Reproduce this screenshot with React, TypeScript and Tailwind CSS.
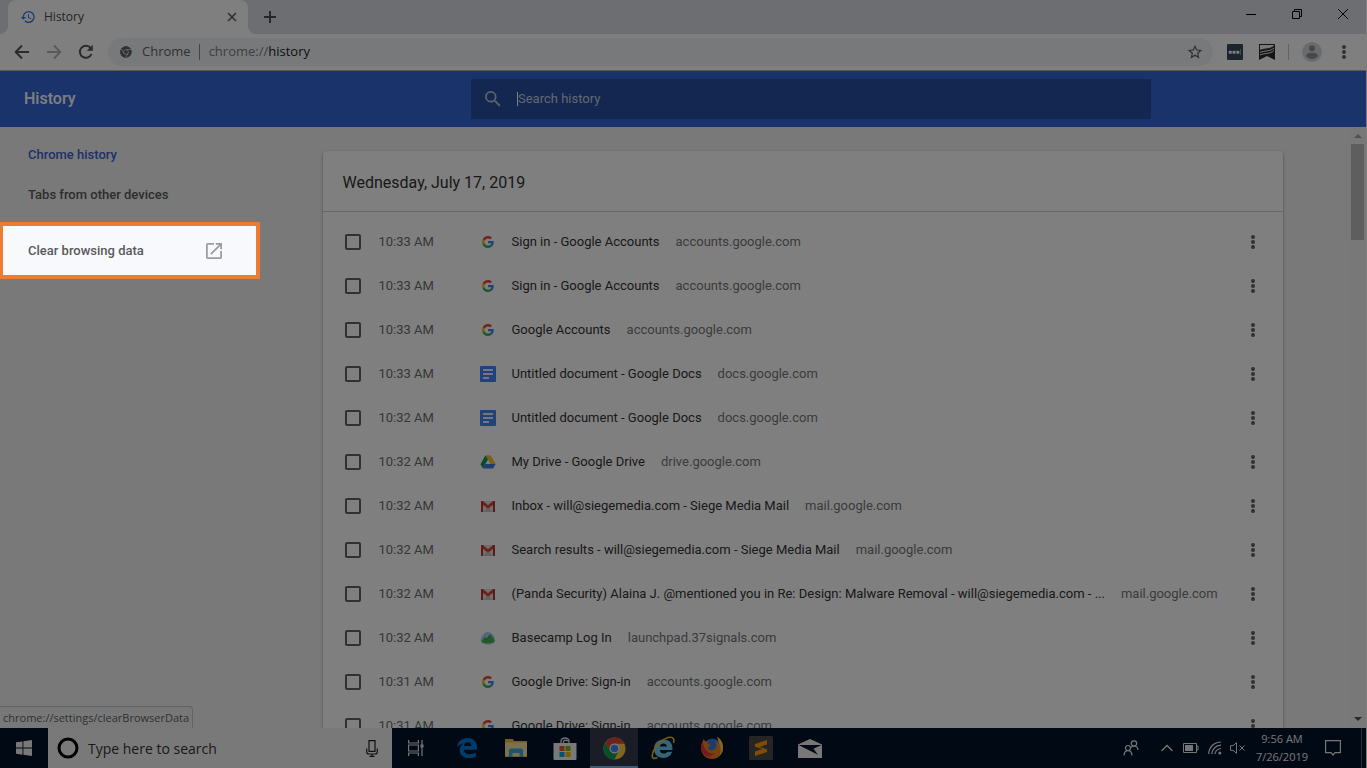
import type { ReactNode } from 'react';

type Favicon = 'google' | 'docs' | 'drive' | 'gmail' | 'basecamp';

interface HistoryEntry {
    id: number;
    time: string;
    icon: Favicon;
    title: string;
    domain: string;
}

const ENTRIES: HistoryEntry[] = [
    { id: 1, time: '10:33 AM', icon: 'google', title: 'Sign in - Google Accounts', domain: 'accounts.google.com' },
    { id: 2, time: '10:33 AM', icon: 'google', title: 'Sign in - Google Accounts', domain: 'accounts.google.com' },
    { id: 3, time: '10:33 AM', icon: 'google', title: 'Google Accounts', domain: 'accounts.google.com' },
    { id: 4, time: '10:33 AM', icon: 'docs', title: 'Untitled document - Google Docs', domain: 'docs.google.com' },
    { id: 5, time: '10:32 AM', icon: 'docs', title: 'Untitled document - Google Docs', domain: 'docs.google.com' },
    { id: 6, time: '10:32 AM', icon: 'drive', title: 'My Drive - Google Drive', domain: 'drive.google.com' },
    { id: 7, time: '10:32 AM', icon: 'gmail', title: 'Inbox - will@siegemedia.com - Siege Media Mail', domain: 'mail.google.com' },
    { id: 8, time: '10:32 AM', icon: 'gmail', title: 'Search results - will@siegemedia.com - Siege Media Mail', domain: 'mail.google.com' },
    { id: 9, time: '10:32 AM', icon: 'gmail', title: '(Panda Security) Alaina J. @mentioned you in Re: Design: Malware Removal - will@siegemedia.com - ...', domain: 'mail.google.com' },
    { id: 10, time: '10:32 AM', icon: 'basecamp', title: 'Basecamp Log In', domain: 'launchpad.37signals.com' },
    { id: 11, time: '10:31 AM', icon: 'google', title: 'Google Drive: Sign-in', domain: 'accounts.google.com' },
    { id: 12, time: '10:31 AM', icon: 'google', title: 'Google Drive: Sign-in', domain: 'accounts.google.com' },
];

function SiteIcon({ icon }: { icon: Favicon }) {
    if (icon === 'google') {
        return (
            <svg className="size-4" viewBox="-8 -8 64 64">
                <path fill="#EA4335" d="M24 9.5c3.54 0 6.71 1.22 9.21 3.6l6.85-6.85C35.9 2.38 30.47 0 24 0 14.62 0 6.51 5.38 2.56 13.22l7.98 6.19C12.43 13.72 17.74 9.5 24 9.5z" />
                <path fill="#4285F4" d="M46.98 24.55c0-1.57-.15-3.09-.38-4.55H24v9.02h12.94c-.58 2.96-2.26 5.48-4.78 7.18l7.73 6c4.51-4.18 7.09-10.36 7.09-17.65z" />
                <path fill="#FBBC05" d="M10.53 28.59A14.5 14.5 0 0 1 9.77 24c0-1.6.27-3.14.76-4.59l-7.98-6.19A23.9 23.9 0 0 0 0 24c0 3.88.92 7.54 2.56 10.78l7.97-6.19z" />
                <path fill="#34A853" d="M24 48c6.48 0 11.93-2.13 15.89-5.81l-7.73-6c-2.15 1.45-4.92 2.3-8.16 2.3-6.26 0-11.57-4.22-13.47-9.91l-7.98 6.19C6.51 42.62 14.62 48 24 48z" />
            </svg>
        );
    }
    if (icon === 'docs') {
        return (
            <svg className="size-4" viewBox="0 0 16 16">
                <rect width="16" height="16" rx="1" fill="#4285f4" />
                <path d="M3 4h10M3 8h10M3 12h6" stroke="#e8eefb" strokeWidth="2" />
            </svg>
        );
    }
    if (icon === 'drive') {
        return (
            <svg className="size-4" viewBox="0 0 16 16">
                <path d="M5.5 1.2h5L15.6 10h-5z" fill="#f9c034" />
                <path d="M5.5 1.2 8 5.6 2.9 14.6.4 10.2z" fill="#0f9d58" />
                <path d="M5.4 10.1h10.2l-2.5 4.500H2.9z" fill="#4477e8" />
            </svg>
        );
    }
    if (icon === 'gmail') {
        return (
            <svg className="size-4" viewBox="0 0 16 16">
                <path d="M1 3h14v11H1z" fill="#dedede" />
                <path d="m3 14 5-5 5 5z" fill="#c4c4c4" />
                <path d="M1 3h2l5 4.200L13 3h2v2.200l-7 5.600-7-5.600z" fill="#dd4338" />
                <path d="M1 3.500h2V14H1zM13 3.500h2V14h-2z" fill="#b9322b" />
            </svg>
        );
    }
    return (
        <svg className="size-4" viewBox="0 0 16 16">
            <path d="M8 2c4 0 6.300 3.800 7.200 8 .5 2.600-2.500 4.500-7.200 4.500S.3 12.600.8 10C1.700 5.800 4 2 8 2z" fill="#a9cfe8" />
            <path d="M1.500 11 4.700 7.400l1.800 2 4-4.600c2 1.800 3.200 4 4 6.200-.7 1.700-3 2.300-6.500 2.300S2 12.500 1.500 11z" fill="#48b04e" />
            <path d="m4.700 7.400 1.800 2 4-4.600" fill="none" stroke="#2c7a3c" strokeWidth="1" />
        </svg>
    );
}

function ChromeLogo({ className, mono }: { className: string; mono?: boolean }) {
    const [red, yellow, green, blue, ring] = mono
        ? ['#5f6368', '#5f6368', '#5f6368', '#5f6368', '#f1f3f4']
        : ['#db4437', '#ffcd40', '#0f9d58', '#4285f4', '#f1f1f1'];
    return (
        <svg className={className} viewBox="0 0 24 24">
            <circle cx="12" cy="12" r="11.500" fill={yellow} />
            <path d="M2.040 6.250A11.500 11.500 0 0 1 21.960 6.250L22 7H12a5 5 0 0 0-4.330 7.500z" fill={red} />
            <path d="M2.040 6.250A11.500 11.500 0 0 0 12 23.500l4.330-9a5 5 0 0 1-8.660 0z" fill={green} />
            {mono && <path d="M12 7h10M7.670 14.500 2.500 5.800M16.330 14.500 11.500 23" stroke={ring} strokeWidth="1.300" />}
            <circle cx="12" cy="12" r="5.200" fill={ring} />
            <circle cx="12" cy="12" r="4" fill={blue} />
        </svg>
    );
}

function Dots() {
    return (
        <svg className="h-[14px] w-4" viewBox="0 1 16 14" fill="#5f6368">
            <circle cx="8" cy="3" r="2" />
            <circle cx="8" cy="8" r="2" />
            <circle cx="8" cy="13" r="2" />
        </svg>
    );
}

function IconButton({ label, className, children }: { label: string; className: string; children: ReactNode }) {
    return (
        <button type="button" aria-label={label} className={`flex shrink-0 items-center justify-center ${className}`}>
            {children}
        </button>
    );
}

function TabStrip() {
    return (
        <div className="flex h-[34px] shrink-0 bg-[#dadce4]">
            {/* rounded feet on both sides of the active tab */}
            <div className="w-2 bg-white">
                <div className="h-full rounded-br-lg bg-[#dadce4]" />
            </div>
            <div className="flex w-60 items-center rounded-t-lg bg-white pr-2 pl-3">
                <svg className="size-4" viewBox="0 0 24 24" fill="#3b78e7">
                    <path d="M13 3a9 9 0 0 0-9 9H1l3.890 3.890.070.140L9 12H6a7 7 0 1 1 2.060 4.940l-1.420 1.420A9 9 0 1 0 13 3zm-1 5v5l4.280 2.540.720-1.210-3.500-2.080V8z" />
                </svg>
                <span className="ml-2 flex-1 text-xs text-[#45494d]">History</span>
                <IconButton label="Close tab" className="size-4">
                    <svg className="size-[10px]" viewBox="0 0 10 10" stroke="#5a5e62" strokeWidth="1.600">
                        <path d="m1 1 8 8M9 1 1 9" />
                    </svg>
                </IconButton>
            </div>
            <div className="w-2 bg-white">
                <div className="h-full rounded-bl-lg bg-[#dadce4]" />
            </div>
            <IconButton label="New tab" className="w-7">
                <svg className="size-3" viewBox="0 0 12 12" stroke="#4a4e52" strokeWidth="2">
                    <path d="M6 0v12M0 6h12" />
                </svg>
            </IconButton>
            <div className="ml-auto flex h-7">
                <IconButton label="Minimize" className="w-[46px]">
                    <svg className="size-[10px]" viewBox="0 0 10 10"><path d="M0 5.500h10" stroke="#000" /></svg>
                </IconButton>
                <IconButton label="Restore" className="w-[46px]">
                    <svg className="size-[10px]" viewBox="0 0 10 10" fill="none" stroke="#000"><path d="M.5 2.500h7v7h-7zM2.500 2.500v-2h7v7h-2" /></svg>
                </IconButton>
                <IconButton label="Close" className="w-[46px]">
                    <svg className="size-[10px]" viewBox="0 0 10 10" stroke="#000"><path d="m0 0 10 10M10 0 0 10" /></svg>
                </IconButton>
            </div>
        </div>
    );
}

function Toolbar() {
    return (
        <div className="flex h-[37px] shrink-0 items-center border-b border-[#b4b4a8] bg-white pr-3 pl-[6px]">
            <IconButton label="Back" className="size-8">
                <svg className="size-4" viewBox="0 0 16 16" fill="none" stroke="#54575b" strokeWidth="2"><path d="M15 8H2M8 1.500 1.700 8 8 14.500" /></svg>
            </IconButton>
            <IconButton label="Forward" className="size-8">
                <svg className="size-4" viewBox="0 0 16 16" fill="none" stroke="#b2b4b6" strokeWidth="2"><path d="M1 8h13M8 1.500 14.300 8 8 14.500" /></svg>
            </IconButton>
            <IconButton label="Reload" className="size-8">
                <svg className="size-4" viewBox="0 0 16 16" fill="none" stroke="#54575b" strokeWidth="2">
                    <path d="M13.500 10A6 6 0 1 1 12.800 4.300" />
                    <path d="M14.800.8v6H8.800z" fill="#54575b" stroke="none" />
                </svg>
            </IconButton>
            <div className="ml-[6px] flex h-7 min-w-0 flex-1 items-center rounded-full bg-[#f1f3f4] pr-2 pl-3 text-[13px]">
                <ChromeLogo className="size-3" mono />
                <span className="ml-[10px] text-[#5f6368]">Chrome</span>
                <span className="mr-[9px] ml-2 h-4 w-px bg-[#85888c]" />
                <span className="text-[#7d8084]">chrome://<span className="text-[#202124]">history</span></span>
                <IconButton label="Bookmark this page" className="ml-auto size-5">
                    <svg className="size-4" viewBox="0 0 24 24" fill="#5f6368">
                        <path d="m23 9-7.900-.7L12 1 8.900 8.300 1 9l6 5.200L5.200 22l6.800-4.100 6.800 4.100-1.800-7.800L23 9zm-11 6.600-4.100 2.500 1.100-4.700-3.600-3.100 4.800-.4L12 5.500l1.900 4.400 4.800.4-3.700 3.100 1.100 4.700-4.100-2.500z" />
                    </svg>
                </IconButton>
            </div>
            <IconButton label="Password manager" className="ml-[14px] size-4">
                <svg className="size-4" viewBox="0 0 16 16">
                    <rect width="16" height="16" rx="1" fill="#38495c" />
                    <path d="M2 7h2.500v2.500H2zM5.800 7h2.500v2.500H5.800zM9.600 7h2.500v2.500H9.600zM13.500 5v6" fill="#fff" stroke="#fff" strokeWidth=".4" />
                </svg>
            </IconButton>
            <IconButton label="Reader extension" className="ml-4 size-4">
                <svg className="size-4" viewBox="0 0 16 16">
                    <path d="M0 0h16v16l-8-4-8 4z" fill="#2b2b2b" />
                    <path d="M1 1h14v1C11 6 6 4 1 6.500z" fill="#f4f4f4" />
                    <path d="M1 8.500C6 6 11 8 15 4M1 11c5-2.500 10-.5 14-4.500" stroke="#f4f4f4" fill="none" />
                    <path d="M1 6.500C6 4 11 6 15 2" stroke="#2b2b2b" fill="none" />
                </svg>
            </IconButton>
            <span className="mx-[13px] h-4 w-px bg-[#c4c7ca]" />
            <IconButton label="Profile" className="size-5">
                <svg className="size-5" viewBox="0 0 20 20">
                    <circle cx="10" cy="10" r="10" fill="#d5d7d9" />
                    <circle cx="10" cy="6.300" r="3" fill="#8c9195" />
                    <path d="M4 14c0-4.500 12-4.500 12 0-1.500 2-3.500 3-6 3s-4.500-1-6-3z" fill="#8c9195" />
                </svg>
            </IconButton>
            <IconButton label="Chrome menu" className="ml-3 size-5">
                <Dots />
            </IconButton>
        </div>
    );
}

function HistoryHeader() {
    return (
        <header className="flex h-14 shrink-0 items-center bg-[#3467d6] font-[Roboto,sans-serif]">
            <h1 className="w-64 shrink-0 pl-6 text-[16px] font-medium text-white">History</h1>
            <div className="flex-1">
                <div className="mx-auto flex h-10 max-w-[680px] items-center bg-[#284fa2] pl-[14px]">
                    <svg className="size-4" viewBox="3 3 18 18" fill="#b8c4e0">
                        <path d="M15.500 14h-.79l-.28-.27A6.470 6.470 0 0 0 16 9.500 6.500 6.500 0 1 0 9.500 16c1.610 0 3.090-.59 4.230-1.570l.27.280v.79l5 4.990L20.490 19l-4.990-5zm-6 0a4.500 4.500 0 1 1 0-9 4.500 4.500 0 0 1 0 9z" />
                    </svg>
                    <span className="ml-4 h-[14px] w-px bg-white" />
                    <input type="text" aria-label="Search history" placeholder="Search history" className="min-w-0 flex-1 bg-transparent text-[13px] text-white outline-none placeholder:text-[#c4cde2]" />
                </div>
            </div>
        </header>
    );
}

function Sidebar() {
    return (
        <nav className="w-64 shrink-0 pt-2 text-[13px] font-medium">
            <a href="#history" className="flex h-10 items-center pl-7 text-[#3b62d4]">Chrome history</a>
            <a href="#devices" className="flex h-10 items-center pl-7 text-[#5a5a5a]">Tabs from other devices</a>
            <a href="#clear" className="relative z-20 mt-[7px] flex h-[57px] w-[260px] items-center border-4 border-l-3 border-[#ee7b33] bg-[#f8f9fc] pr-[34px] pl-[25px] text-[#5a5a5a]">
                <span className="flex-1">Clear browsing data</span>
                <svg className="size-4" viewBox="3 3 18 18" fill="#9a9da2">
                    <path d="M19 19H5V5h7V3H5a2 2 0 0 0-2 2v14a2 2 0 0 0 2 2h14c1.100 0 2-.9 2-2v-7h-2v7zM14 3v2h3.590l-9.830 9.830 1.410 1.410L19 6.410V10h2V3h-7z" />
                </svg>
            </a>
        </nav>
    );
}

function HistoryCard() {
    return (
        <main className="min-w-0 flex-1">
            <section className="mx-auto mt-6 max-w-[960px] rounded-t bg-white pb-2 shadow-[0_1px_3px_rgba(0,0,0,0.4)]">
                <h2 className="flex h-[61px] items-center border-b border-[#cfcfcf] pt-1 pl-5 text-[16px] text-[#333]">Wednesday, July 17, 2019</h2>
                <ul className="pt-2">
                    {ENTRIES.map((entry) => (
                        <li key={entry.id} className="flex h-11 items-center pr-5 pl-[22px] text-[13px]">
                            <input type="checkbox" aria-label={entry.title} className="size-4 shrink-0 appearance-none rounded-[2px] border-2 border-[#5f6368]" />
                            <span className="ml-[18px] w-[101px] shrink-0 text-[#6e6e6e]">{entry.time}</span>
                            <span className="shrink-0"><SiteIcon icon={entry.icon} /></span>
                            <a href="#visit" className="ml-4 truncate text-[#333]">{entry.title}</a>
                            <span className="ml-4 shrink-0 text-[#777]">{entry.domain}</span>
                            <IconButton label="Actions" className="ml-auto size-5">
                                <Dots />
                            </IconButton>
                        </li>
                    ))}
                </ul>
            </section>
        </main>
    );
}

function Scrollbar() {
    return (
        <div className="flex w-[17px] shrink-0 flex-col items-center justify-between bg-[#f1f1f1] py-[6px]">
            <div className="flex flex-col items-center gap-[6px]">
                <svg className="h-[5px] w-2" viewBox="0 0 8 5"><path d="m0 5 4-4 4 4z" fill="#a0a0a0" /></svg>
                <div className="h-24 w-[13px] bg-[#bcbcbc]" />
            </div>
            <svg className="h-[5px] w-2" viewBox="0 0 8 5"><path d="m0 0 4 4 4-4z" fill="#505050" /></svg>
        </div>
    );
}

const PINNED: { name: string; active?: boolean; art: ReactNode }[] = [
    {
        name: 'Microsoft Edge',
        art: (
            <svg className="size-5" viewBox="0 0 20 20">
                <path d="M0 9C.8 3.500 4.800 0 10.500 0 16.500 0 20 4.200 20 9.500v2.300H6.800c.2 3 2.700 4.500 6 4.500 2.200 0 4.200-.6 6-1.700v4c-2 1.100-4.200 1.500-6.700 1.500C6.500 20.100 2.700 17 2.700 12.300c0-3 1.500-5.600 4.300-7C4.500 5.600 2 6.800 0 9zm6.900-1h7.400c0-2.400-1.200-3.800-3.500-3.800S7.200 5.700 6.900 8z" fill="#0078d7" />
            </svg>
        ),
    },
    {
        name: 'File Explorer',
        art: (
            <svg className="h-[18px] w-[22px]" viewBox="0 0 22 18">
                <path d="M0 0h8l1 2h13v16H0z" fill="#e8b84a" />
                <path d="M0 3.500h22V17H0z" fill="#f9e29c" />
                <path d="M4 18v-6.500a2 2 0 0 1 2-2h10a2 2 0 0 1 2 2V18h-3.500v-4h-7v4z" fill="#3fa9dc" />
            </svg>
        ),
    },
    {
        name: 'Microsoft Store',
        art: (
            <svg className="h-[23px] w-6" viewBox="0 0 24 23">
                <path d="M8 6V4a4 3 0 0 1 8 0v2M10.500 6V4a4 3 0 0 1 5 0" fill="none" stroke="#ddd" strokeWidth="1.300" />
                <path d="M.5 6h23v16a1 1 0 0 1-1 1h-21a1 1 0 0 1-1-1z" fill="#f2f2f2" />
                <path d="M6.500 9h5v5h-5z" fill="#f25022" />
                <path d="M12.500 9h5v5h-5z" fill="#7fba00" />
                <path d="M6.500 15h5v5h-5z" fill="#00a4ef" />
                <path d="M12.500 15h5v5h-5z" fill="#ffb900" />
            </svg>
        ),
    },
    { name: 'Google Chrome', active: true, art: <ChromeLogo className="size-[23px]" /> },
    {
        name: 'Internet Explorer',
        art: (
            <svg className="size-6" viewBox="0 0 24 24">
                <path d="M3 13C3 7 7 3.500 12.500 3.500c6 0 9.500 4 9 10.500H8.800c.3 2.400 1.800 3.600 4 3.600 1.700 0 2.900-.6 3.600-1.800h4.700c-1.300 4-4.400 6.200-8.600 6.200C6.800 22 3 18.500 3 13zm5.900-2.500h7c-.3-2-1.500-3-3.400-3s-3.200 1-3.600 3z" fill="#6ccbf5" />
                <path d="M22.500 7C23.500 3.500 22.500 1 19 1.200 12 1.500 3 11 1.500 18c-1 4 1 5.500 5 3.500" fill="none" stroke="#f2b820" strokeWidth="1.600" />
            </svg>
        ),
    },
    {
        name: 'Firefox',
        art: (
            <svg className="size-6" viewBox="0 0 24 24">
                <circle cx="12.500" cy="11.500" r="9" fill="#2d7fe0" />
                <path d="M17 1c4 2 6 6 6 11a11 11 0 0 1-22 0c0-3 .6-5 2-7 .3-1.500.8-2 1-2 .2 1.500 1 2.300 2 2.500 1-.6 2-.7 3-.5-1.600 1-2 2-1.500 3l3 .8c.3 1.200-2.500 1.500-2.300 3.200.5 2.500 3.800 3 6 1.500 2.800-1.800 3-6 1-8.500 2.500 1 3 2 3.300 3C18.800 5 18.500 2.500 17 1z" fill="#f58220" />
                <path d="M1 12c0-3 .6-5 2-7 0 8 5 13.500 12 12.500-2 2-5 3-8 2 5 2.500 9 2 12-.5A11 11 0 0 1 1 12z" fill="#e5393a" />
                <path d="M17 1c4 2 6 6 6 11 0 3-1.500 6-3.500 8 2-5 1-8 .5-10-.7-3-1.800-6-3-9z" fill="#ffcf3d" />
            </svg>
        ),
    },
    {
        name: 'Sublime Text',
        art: (
            <svg className="size-6" viewBox="0 0 24 24">
                <rect width="24" height="24" rx="1.500" fill="#4a4a4a" />
                <path d="m6 8 12-4v4.500l-7.500 2.400 7.500 2.300V16L6 20v-4.500l7.500-2.400L6 10.700z" fill="#ff9c00" />
            </svg>
        ),
    },
    {
        name: 'Mail',
        art: (
            <svg className="h-[19px] w-6" viewBox="0 0 24 19">
                <path d="M0 5.500 12 0l12 5.500V19H0z" fill="#f0f0f0" />
                <path d="M.5 6 20 15.800 15.500 9.800 23.500 6z" fill="#04132b" />
            </svg>
        ),
    },
];

function Taskbar() {
    return (
        <footer className="flex h-10 shrink-0 bg-[#03122a]">
            <IconButton label="Start" className="w-12">
                <svg className="size-4" viewBox="0 0 16 16" fill="#f0f0f0">
                    <path d="M0 2.300 6.500 1.400V7.600H0zM7.400 1.200 16 0v7.600H7.400zM0 8.500h6.500v6.200L0 13.800zM7.400 8.500H16V16l-8.600-1.200z" />
                </svg>
            </IconButton>
            <label className="flex w-[344px] items-center bg-[#f2f2f2] pr-[14px] pl-[9px]">
                <svg className="size-[22px]" viewBox="0 0 22 22"><circle cx="11" cy="11" r="9" fill="none" stroke="#000" strokeWidth="3" /></svg>
                <input type="text" aria-label="Search Windows" placeholder="Type here to search" className="ml-[9px] min-w-0 flex-1 bg-transparent text-[14px] outline-none placeholder:text-[#333]" />
                <svg className="h-[17px] w-3" viewBox="0 0 12 17" fill="none" stroke="#222" strokeWidth="1.200">
                    <path d="M3 .6h6v10.800H3zM.7 8.500v3.200c0 1.500 1 2.300 2.300 2.300h6c1.300 0 2.300-.8 2.300-2.300V8.500M6 14v2.400M3.500 16.400h5" />
                </svg>
            </label>
            <IconButton label="Task view" className="mr-[3px] w-12">
                <svg className="size-4" viewBox="0 0 16 16" fill="none" stroke="#e8e8e8" strokeWidth="1.200">
                    <path d="M.6 0v3h9.800V0M.6 16v-3h9.800v3M.6 5h9.800v6H.6zM14 0v16" />
                    <path d="M12.500 4.500h3v3h-3z" fill="#e8e8e8" stroke="none" />
                </svg>
            </IconButton>
            <div className="flex gap-px">
                {PINNED.map((app) => (
                    <IconButton key={app.name} label={app.name} className={app.active ? 'w-12 border-b-2 border-[#76b9ed] bg-[#343b4c] pt-[2px]' : 'w-12'}>
                        {app.art}
                    </IconButton>
                ))}
            </div>
            <div className="ml-auto flex items-center text-[#ececec]">
                <IconButton label="People" className="mr-3 w-6">
                    <svg className="size-4" viewBox="0 0 16 16" fill="none" stroke="currentColor" strokeWidth="1.200">
                        <circle cx="11" cy="3.500" r="2.700" />
                        <circle cx="5" cy="8" r="2.500" />
                        <path d="M7.500 8c1-1.500 2.200-2 3.500-2 2.300 0 3.800 1.500 4 4M1 15.500c.2-3 1.600-4.800 4-4.800s3.800 1.800 4 4.800" />
                    </svg>
                </IconButton>
                <IconButton label="Show hidden icons" className="w-6">
                    <svg className="h-2 w-3" viewBox="0 0 12 8" fill="none" stroke="currentColor" strokeWidth="1.300"><path d="m.5 7 5.500-5.500L11.500 7" /></svg>
                </IconButton>
                <IconButton label="Battery" className="w-6">
                    <svg className="h-[10px] w-4" viewBox="0 0 16 10">
                        <path d="M.5.500h13v9H.5zM13.500 3H15v4h-1.500" fill="none" stroke="currentColor" />
                        <path d="M2 2h8v6H2z" fill="currentColor" />
                    </svg>
                </IconButton>
                <IconButton label="Network" className="w-6">
                    <svg className="size-[14px]" viewBox="0 0 14 14" fill="none" stroke="currentColor" strokeWidth="1.200">
                        <path d="M.7 13C1 6 6 1.200 13 1M3.800 13C4 8 8 4.400 13 4.200M7 13c.2-3 3-5.400 6-5.500" />
                        <circle cx="11.800" cy="12" r="1.500" fill="currentColor" stroke="none" />
                    </svg>
                </IconButton>
                <IconButton label="Volume muted" className="w-5">
                    <svg className="h-3 w-[15px]" viewBox="0 0 15 12" fill="none" stroke="currentColor">
                        <path d="M.5 3.700H3L6.500.700v10.600L3 8.300H.5zM9.500 3.500l5 5M14.500 3.500l-5 5" />
                    </svg>
                </IconButton>
                <div className="w-[70px] text-center text-[11px] leading-[18px]">
                    <div>9:56 AM</div>
                    <div>7/26/2019</div>
                </div>
                <IconButton label="Notifications" className="mr-3 w-8">
                    <svg className="size-4" viewBox="0 0 16 16" fill="none" stroke="currentColor" strokeWidth="1.200"><path d="M.6.600h14.800v12H10L8 15l-2-2.400H.6z" /></svg>
                </IconButton>
                <span className="mr-1 h-10 w-px bg-[#57606e]" />
            </div>
        </footer>
    );
}

export default function App() {
    return (
        <div className="relative flex h-screen flex-col overflow-hidden bg-white pr-px font-['Open_Sans',sans-serif]">
            <TabStrip />
            <Toolbar />
            <HistoryHeader />
            <div className="relative flex min-h-0 flex-1 overflow-hidden bg-[#f3f3f3] font-[Roboto,sans-serif]">
                <Sidebar />
                <HistoryCard />
                <Scrollbar />
                <div className="absolute bottom-0 left-0 rounded-tr border-t border-r border-[#c4c4c4] bg-[#f1f1f1] px-[3px] py-px font-['Open_Sans',sans-serif] text-[11px] leading-[19px] text-[#5f6368]">
                    chrome://settings/clearBrowserData
                </div>
            </div>
            <Taskbar />
            {/* dim everything except the highlighted sidebar link */}
            <div className="pointer-events-none absolute inset-0 z-10 bg-black/50" />
        </div>
    );
}
